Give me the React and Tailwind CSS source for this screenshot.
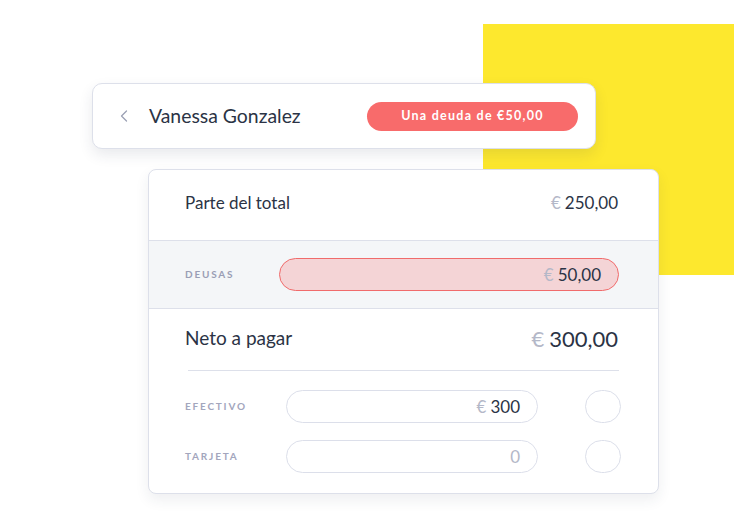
import { ChevronLeft } from "lucide-react";

const FONT = { fontFamily: "Lato, 'Open Sans', sans-serif" };

function PayRow({ label, value, muted }) {
  return (
    <div className="flex items-center h-[33px]">
      <span className="w-[101px] text-[10px] font-bold tracking-[0.18em] text-[#a3a6bd]">{label}</span>
      <div className="w-[252px] h-[33px] rounded-full border border-[#dcdfea] bg-white flex items-center justify-end pr-[17px] text-[17px]">
        {muted ? (
          <span className="text-[#b4b8c8]">{value}</span>
        ) : (
          <>
            <span className="text-[#b4b8c8] mr-[4px]">€</span>
            <span className="text-[#2b3345]">{value}</span>
          </>
        )}
      </div>
      <div className="ml-[47px] w-[36px] h-[33px] rounded-full border border-[#dcdfea]" />
    </div>
  );
}

export default function App() {
  return (
    <div className="relative w-[750px] h-[520px] bg-white overflow-hidden" style={FONT}>
      {/* yellow block behind cards */}
      <div className="absolute left-[483px] top-[24px] w-[251px] h-[251px] bg-[#fde82e]" />

      <div className="relative pt-[83px] flex flex-col">
        {/* header card */}
        <div className="ml-[92px] w-[504px] h-[66px] rounded-[10px] border border-[#dde0ea] bg-white shadow-[0_6px_14px_rgba(40,50,80,0.10)] flex items-center pl-[21px] pr-[17px]">
          <ChevronLeft size={20} strokeWidth={1.5} className="text-[#9ba0b4]" />
          <span className="ml-[15px] text-[19.4px] text-[#2b3345]">Vanessa Gonzalez</span>
          <span className="ml-auto w-[211px] h-[29px] rounded-full bg-[#f86b6b] text-white text-[12.5px] font-bold tracking-[0.1em] flex items-center justify-center">
            Una deuda de €50,00
          </span>
        </div>

        {/* main card */}
        <div className="ml-[148px] mt-[20px] w-[511px] h-[325px] rounded-[8px] border border-[#dde0ea] bg-white shadow-[0_6px_14px_rgba(40,50,80,0.08)] overflow-hidden flex flex-col">
          <div className="h-[70px] flex items-center justify-between pl-[36px] pr-[40px] pb-[4px]">
            <span className="text-[17px] text-[#2b3345]">Parte del total</span>
            <span className="text-[17px]">
              <span className="text-[#b4b8c8] mr-[4px]">€</span>
              <span className="text-[#2b3345]">250,00</span>
            </span>
          </div>

          <div className="h-[69px] bg-[#f4f6f8] border-y border-[#dde0ea] flex items-center pl-[36px] pr-[39px]">
            <span className="w-[94px] text-[10px] font-bold tracking-[0.18em] text-[#9a9eb5]">DEUSAS</span>
            <div className="flex-1 h-[33px] rounded-full border border-[#f06b6b] bg-[#f4d4d6] flex items-center justify-end pr-[17px] text-[17px]">
              <span className="text-[#b4b8c8] mr-[4px]">€</span>
              <span className="text-[#2b3345]">50,00</span>
            </div>
          </div>

          <div className="h-[61px] flex items-center justify-between pl-[36px] pr-[40px] pb-[3px]">
            <span className="text-[19px] text-[#2b3345]">Neto a pagar</span>
            <span className="text-[22px]">
              <span className="text-[#b4b8c8] mr-[5px]">€</span>
              <span className="text-[#2b3345]">300,00</span>
            </span>
          </div>

          <div className="mx-[39px] border-t border-[#dde0ea]" />

          <div className="pl-[36px] pt-[19px] flex flex-col gap-[17px]">
            <PayRow label="EFECTIVO" value="300" />
            <PayRow label="TARJETA" value="0" muted />
          </div>
        </div>
      </div>
    </div>
  );
}
